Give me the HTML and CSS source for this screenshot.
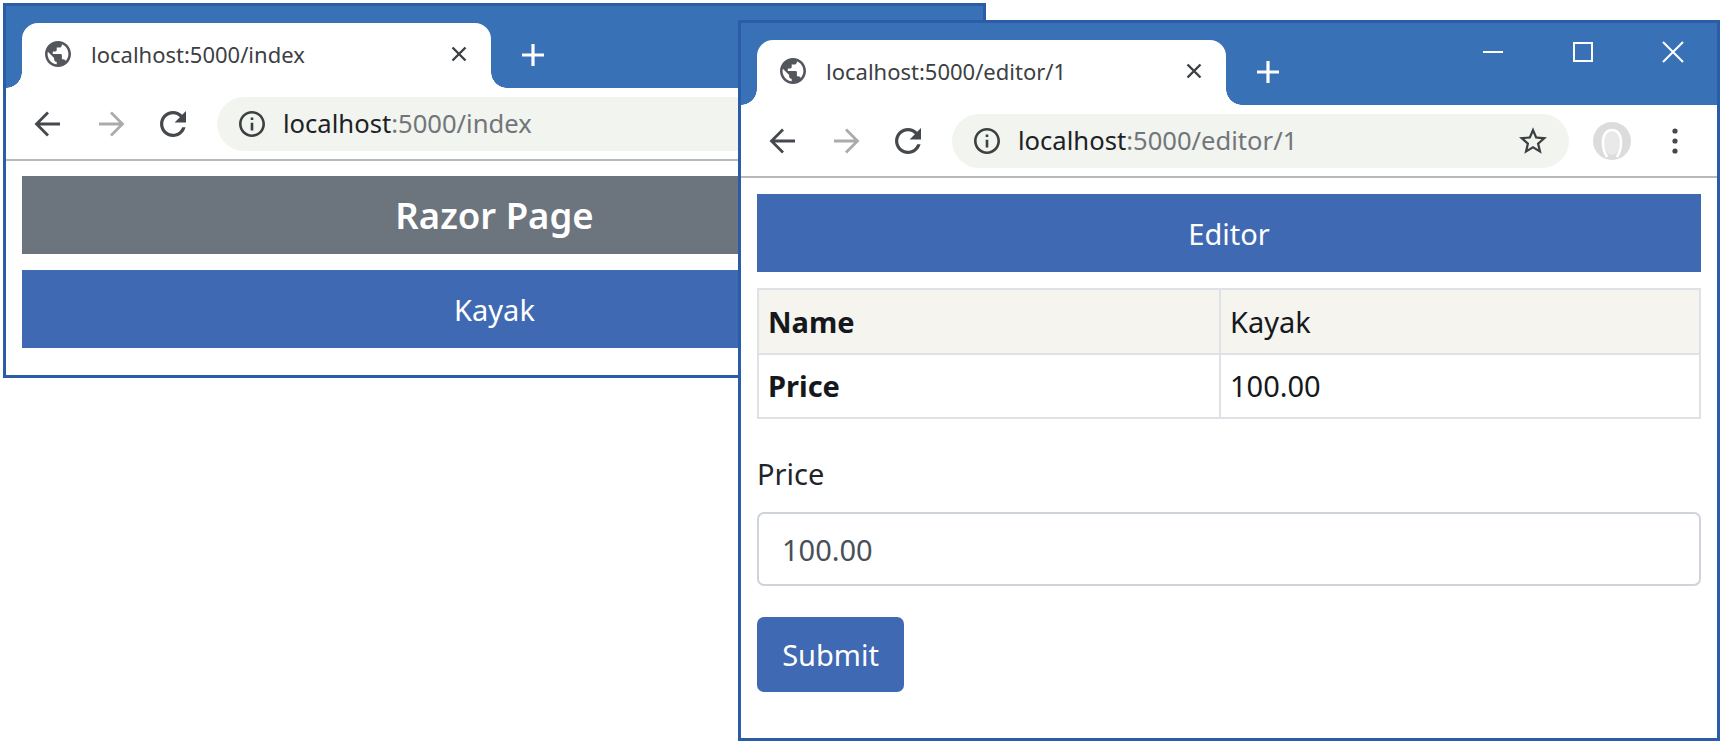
FILE: index.html
```html
<!DOCTYPE html>
<html lang="en">
<head>
    <meta charset="UTF-8">
    <meta name="viewport" content="width=device-width, initial-scale=1.0">
    <title>Razor Page and Editor</title>
    <link rel="stylesheet" href="styles.css">
</head>
<body>
    <!-- Shared icons -->
    <svg class="sprite" aria-hidden="true">
        <symbol id="i-globe" viewBox="2 2 20 20"><path d="M12 2C6.48 2 2 6.48 2 12s4.48 10 10 10 10-4.48 10-10S17.52 2 12 2zm-1 17.93c-3.95-.49-7-3.85-7-7.93 0-.62.08-1.21.21-1.79L9 15v1c0 1.1.9 2 2 2v1.93zm6.9-2.54c-.26-.81-1-1.39-1.9-1.39h-1v-3c0-.55-.45-1-1-1H8v-2h2c.55 0 1-.45 1-1V7h2c1.1 0 2-.9 2-2v-.41c2.93 1.19 5 4.06 5 7.41 0 2.08-.8 3.97-2.1 5.39z"/></symbol>
        <symbol id="i-close" viewBox="0 0 18 18"><path d="M2.5 2.5l13 13M15.5 2.5l-13 13" fill="none" stroke="currentColor" stroke-width="2.4"/></symbol>
        <symbol id="i-plus" viewBox="0 0 24 24"><path d="M12 1v22M1 12h22" fill="none" stroke="currentColor" stroke-width="3.2"/></symbol>
        <symbol id="i-back" viewBox="0 0 28 28"><path d="M26 14H3M14 2.5L2.5 14 14 25.5" fill="none" stroke="currentColor" stroke-width="2.8"/></symbol>
        <symbol id="i-forward" viewBox="0 0 28 28"><path d="M2 14h23M14 2.5L25.500 14 14 25.500" fill="none" stroke="currentColor" stroke-width="2.8"/></symbol>
        <symbol id="i-reload" viewBox="4 4 16 16"><path d="M17.65 6.35C16.2 4.9 14.21 4 12 4c-4.42 0-7.99 3.58-7.99 8s3.57 8 7.99 8c3.730 0 6.840-2.550 7.730-6h-2.080c-.82 2.330-3.040 4-5.650 4-3.310 0-6-2.690-6-6s2.690-6 6-6c1.660 0 3.140.69 4.220 1.780L13 11h7V4l-2.350 2.350z"/></symbol>
        <symbol id="i-info" viewBox="2 2 20 20"><path d="M11 7h2v2h-2zm0 4h2v6h-2zm1-9C6.48 2 2 6.48 2 12s4.48 10 10 10 10-4.480 10-10S17.520 2 12 2zm0 18c-4.410 0-8-3.590-8-8s3.590-8 8-8 8 3.590 8 8-3.590 8-8 8z"/></symbol>
    </svg>

    <!-- Left window -->
    <div class="window window-index">
        <div class="tabstrip">
            <div class="tab">
                <svg class="tab-globe"><use href="#i-globe"/></svg>
                <span class="tab-title">localhost:5000/index</span>
                <svg class="tab-close"><use href="#i-close"/></svg>
            </div>
            <svg class="new-tab"><use href="#i-plus"/></svg>
        </div>
        <div class="toolbar">
            <svg class="nav-icon"><use href="#i-back"/></svg>
            <svg class="nav-icon nav-disabled"><use href="#i-forward"/></svg>
            <svg class="nav-icon nav-reload"><use href="#i-reload"/></svg>
            <div class="omnibox">
                <svg class="omni-info"><use href="#i-info"/></svg>
                <span class="url">localhost<span class="url-rest">:5000/index</span></span>
            </div>
        </div>
        <div class="page">
            <div class="banner banner-grey">Razor Page</div>
            <div class="banner banner-blue">Kayak</div>
        </div>
    </div>

    <!-- Right window -->
    <div class="window window-editor">
        <div class="tabstrip">
            <div class="tab">
                <svg class="tab-globe"><use href="#i-globe"/></svg>
                <span class="tab-title">localhost:5000/editor/1</span>
                <svg class="tab-close"><use href="#i-close"/></svg>
            </div>
            <svg class="new-tab"><use href="#i-plus"/></svg>
            <div class="win-controls">
                <svg class="win-icon" viewBox="0 0 22 22"><path d="M1 11h20" fill="none" stroke="currentColor" stroke-width="2"/></svg>
                <svg class="win-icon" viewBox="0 0 22 22"><rect x="2" y="2" width="18" height="18" fill="none" stroke="currentColor" stroke-width="2"/></svg>
                <svg class="win-icon" viewBox="0 0 22 22"><path d="M1 1l20 20M21 1L1 21" fill="none" stroke="currentColor" stroke-width="2"/></svg>
            </div>
        </div>
        <div class="toolbar">
            <svg class="nav-icon"><use href="#i-back"/></svg>
            <svg class="nav-icon nav-disabled"><use href="#i-forward"/></svg>
            <svg class="nav-icon nav-reload"><use href="#i-reload"/></svg>
            <div class="omnibox">
                <svg class="omni-info"><use href="#i-info"/></svg>
                <span class="url">localhost<span class="url-rest">:5000/editor/1</span></span>
                <svg class="omni-star" viewBox="2 2 20 19"><path d="M22 9.240l-7.190-.62L12 2 9.190 8.630 2 9.240l5.460 4.730L5.820 21 12 17.270 18.180 21l-1.630-7.030L22 9.240zM12 15.400l-3.760 2.270 1-4.280-3.320-2.880 4.380-.38L12 6.100l1.710 4.040 4.380.38-3.320 2.880 1 4.280L12 15.400z"/></svg>
            </div>
            <svg class="avatar" viewBox="0 0 38 38">
                <circle cx="19" cy="19" r="19" fill="#dcdcdc"/>
                <ellipse cx="19" cy="20" rx="8" ry="13" fill="#e9e9e9"/>
                <path d="M14 35C8 25 8 8 19 8s11 17 5 27" fill="none" stroke="#fff" stroke-width="2.600"/>
            </svg>
            <svg class="kebab" viewBox="0 0 6 26"><circle cx="3" cy="3" r="2.600"/><circle cx="3" cy="13" r="2.600"/><circle cx="3" cy="23" r="2.600"/></svg>
        </div>
        <div class="page">
            <div class="banner banner-blue banner-first">Editor</div>
            <table class="details">
                <tr class="row-striped"><th>Name</th><td>Kayak</td></tr>
                <tr><th>Price</th><td>100.00</td></tr>
            </table>
            <form class="price-form">
                <label class="field-label" for="price">Price</label>
                <input class="field-input" type="text" id="price" value="100.00">
                <button class="submit-btn" type="button">Submit</button>
            </form>
        </div>
    </div>
</body>
</html>
```

FILE: styles.css
```css
body {
    margin: 0;
    background-color: #fff;
    font-family: "Noto Sans", "Open Sans", sans-serif;
    color: #212529;
    overflow: hidden;
}

.sprite {
    display: none;
}

/* Browser windows sit on a free canvas */
.window {
    position: absolute;
    box-sizing: border-box;
    display: flex;
    flex-direction: column;
    background-color: #fff;
    border: 3px solid #2b5ca8;
}

.window-index {
    left: 3px;
    top: 3px;
    width: 983px;
    height: 375px;
}

.window-editor {
    left: 738px;
    top: 20px;
    width: 982px;
    height: 721px;
}

/* Tab strip */
.tabstrip {
    display: flex;
    align-items: flex-end;
    height: 82px;
    flex-shrink: 0;
    background-color: #3871b5;
    padding-left: 16px;
}

.tab {
    position: relative;
    display: flex;
    align-items: center;
    box-sizing: border-box;
    width: 469px;
    height: 65px;
    padding: 0 23px 4px 23px;
    background-color: #fff;
    border-radius: 16px 16px 0 0;
}

.tab::before,
.tab::after {
    content: "";
    position: absolute;
    bottom: 0;
    width: 16px;
    height: 16px;
}

.tab::before {
    left: -16px;
    background: radial-gradient(circle at 0 0, transparent 15.5px, #fff 16px);
}

.tab::after {
    right: -16px;
    background: radial-gradient(circle at 100% 0, transparent 15.5px, #fff 16px);
}

.tab-globe {
    width: 26px;
    height: 26px;
    fill: #53565c;
    flex-shrink: 0;
}

.tab-title {
    flex: 1;
    margin-left: 20px;
    font-size: 22px;
    color: #3c4043;
    white-space: nowrap;
}

.tab-close {
    width: 18px;
    height: 18px;
    color: #3c4043;
    flex-shrink: 0;
}

.new-tab {
    width: 24px;
    height: 24px;
    margin: 0 0 21px 30px;
    color: #fff;
    flex-shrink: 0;
}

.win-controls {
    display: flex;
    gap: 68px;
    margin-left: auto;
    margin-right: 33px;
    align-self: flex-start;
    margin-top: 18px;
    color: #fff;
}

.win-icon {
    width: 22px;
    height: 22px;
}

/* Toolbar */
.toolbar {
    display: flex;
    align-items: center;
    box-sizing: border-box;
    height: 73px;
    flex-shrink: 0;
    padding: 0 0 0 28px;
    border-bottom: 2px solid #b9b9b9;
}

.nav-icon {
    width: 28px;
    height: 28px;
    margin-right: 35px;
    color: #45494e;
    fill: #45494e;
    flex-shrink: 0;
}

.nav-disabled {
    color: #a9abad;
}

.nav-reload {
    width: 26px;
    height: 26px;
    margin-right: 31px;
}

.omnibox {
    display: flex;
    align-items: center;
    box-sizing: border-box;
    flex: 0 0 617px;
    height: 54px;
    padding: 0 22px 0 22px;
    border-radius: 27px;
    background-color: #f1f4ef;
}

.omni-info {
    width: 26px;
    height: 26px;
    fill: #3c4043;
    flex-shrink: 0;
}

.url {
    flex: 1;
    margin-left: 18px;
    font-size: 25.6px;
    color: #202124;
    white-space: nowrap;
}

.url-rest {
    color: #72767a;
}

.omni-star {
    width: 28px;
    height: 27px;
    fill: #3c4043;
    flex-shrink: 0;
}

.avatar {
    width: 38px;
    height: 38px;
    margin-left: 24px;
    flex-shrink: 0;
}

.kebab {
    width: 6px;
    height: 26px;
    margin-left: 41px;
    fill: #45494e;
    flex-shrink: 0;
}

/* Page content */
.page {
    padding: 15px 16px 0;
}

.banner {
    display: flex;
    align-items: center;
    justify-content: center;
    height: 78px;
    color: #fff;
    font-size: 29px;
}

.banner-grey {
    background-color: #6c757d;
    font-size: 36.5px;
    font-weight: 600;
    margin-bottom: 16px;
}

.banner-blue {
    background-color: #3f6ab3;
}

.banner-first {
    margin-top: 1px;
    margin-bottom: 16px;
}

.details {
    width: 100%;
    table-layout: fixed;
    border-collapse: collapse;
    font-size: 29px;
}

.details th,
.details td {
    box-sizing: border-box;
    height: 64.5px;
    padding: 0 9px;
    border: 2px solid #dee2e6;
    text-align: left;
    color: #16191c;
}

.details th {
    width: 462px;
    font-weight: 700;
}

.row-striped {
    background-color: #f5f4ef;
}

.price-form {
    display: flex;
    flex-direction: column;
    align-items: flex-start;
}

.field-label {
    margin-top: 36px;
    line-height: 38px;
    font-size: 29px;
}

.field-input {
    box-sizing: border-box;
    width: 100%;
    height: 74px;
    margin-top: 19px;
    padding: 0 23px;
    border: 2px solid #ced4da;
    border-radius: 7px;
    font-family: inherit;
    font-size: 29px;
    color: #495057;
}

.submit-btn {
    width: 147px;
    height: 75px;
    margin-top: 31px;
    border: none;
    border-radius: 7px;
    background-color: #3f6ab3;
    color: #fff;
    font-family: inherit;
    font-size: 29px;
    padding: 0;
}
```
